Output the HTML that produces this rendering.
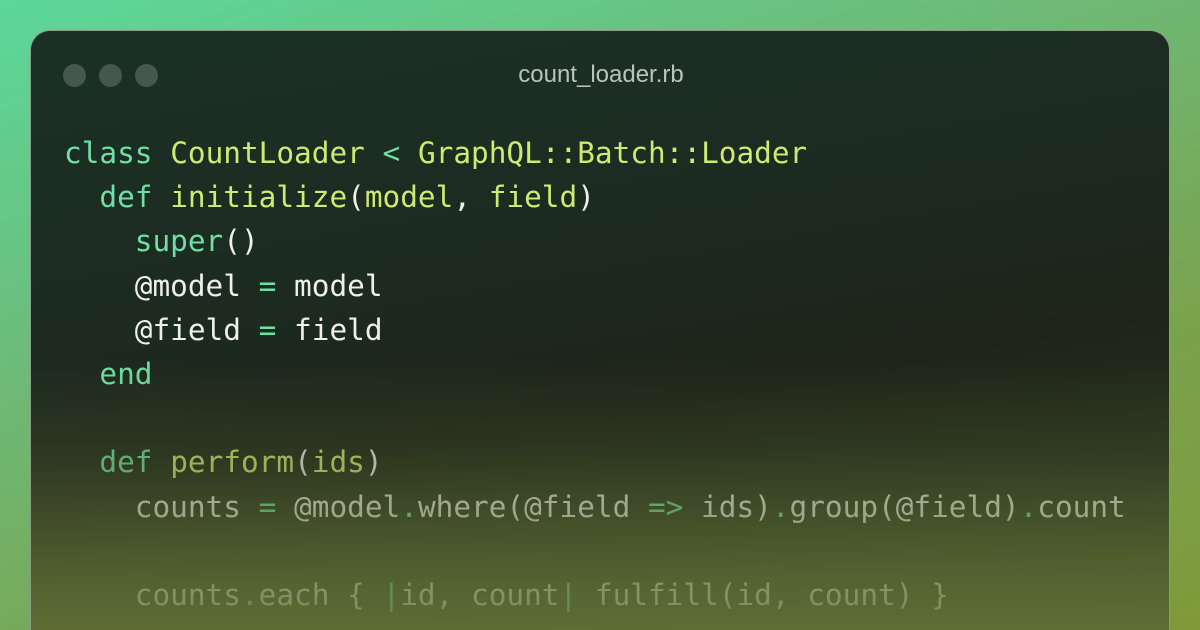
<!DOCTYPE html>
<html><head><style>
html,body{margin:0;padding:0;width:1200px;height:630px;overflow:hidden}
body{background:linear-gradient(160deg,#5cd89a 0%,#6dbb78 35%,#7aa34e 70%,#7f9a3a 100%);position:relative;font-family:"Liberation Sans",sans-serif}
.win{position:absolute;left:30px;top:30px;width:1138px;height:600px;border-radius:20px 20px 0 0;border:1px solid #8a9a8a;border-bottom:0;background:linear-gradient(170deg,#1b3126 0%,#1c2a20 40%,#1f2418 60%,#2a3a22 100%);overflow:hidden}
.dot{position:absolute;top:33px;width:23px;height:23px;border-radius:50%;background:#46584e}
.title{position:absolute;top:30px;left:0;right:0;text-align:center;color:#b8c4bc;font-size:24px;padding-left:2px}
pre{position:absolute;left:33px;top:100px;margin:0;font-family:"DejaVu Sans Mono",monospace;font-size:29.4px;line-height:44.2px;color:#eef0ea}
.k{color:#6fe0a4}.n{color:#cdea72}.o{color:#6fe0a4}
.fade{position:absolute;left:0;right:0;top:0;bottom:0;background:linear-gradient(180deg,rgba(40,60,35,0) 0%,rgba(40,60,35,0) 55%,rgba(70,85,45,.35) 70%,rgba(98,115,55,.72) 90%,rgba(104,120,56,.85) 100%)}
</style></head><body>
<div class="win">
<div class="dot" style="left:32px"></div><div class="dot" style="left:68px"></div><div class="dot" style="left:104px"></div>
<div class="title">count_loader.rb</div>
<pre><span class="k">class</span> <span class="n">CountLoader</span> <span class="o">&lt;</span> <span class="n">GraphQL::Batch::Loader</span>
  <span class="k">def</span> <span class="n">initialize</span>(<span class="n">model</span>, <span class="n">field</span>)
    <span class="k">super</span>()
    @model <span class="o">=</span> model
    @field <span class="o">=</span> field
  <span class="k">end</span>

  <span class="k">def</span> <span class="n">perform</span>(<span class="n">ids</span>)
    counts <span class="o">=</span> @model<span class="o">.</span>where(@field <span class="o">=&gt;</span> ids)<span class="o">.</span>group(@field)<span class="o">.</span>count

    counts<span class="o">.</span>each { <span class="o">|</span>id, count<span class="o">|</span> fulfill(id, count) }</pre>
<div class="fade"></div>
</div>
</body></html>
